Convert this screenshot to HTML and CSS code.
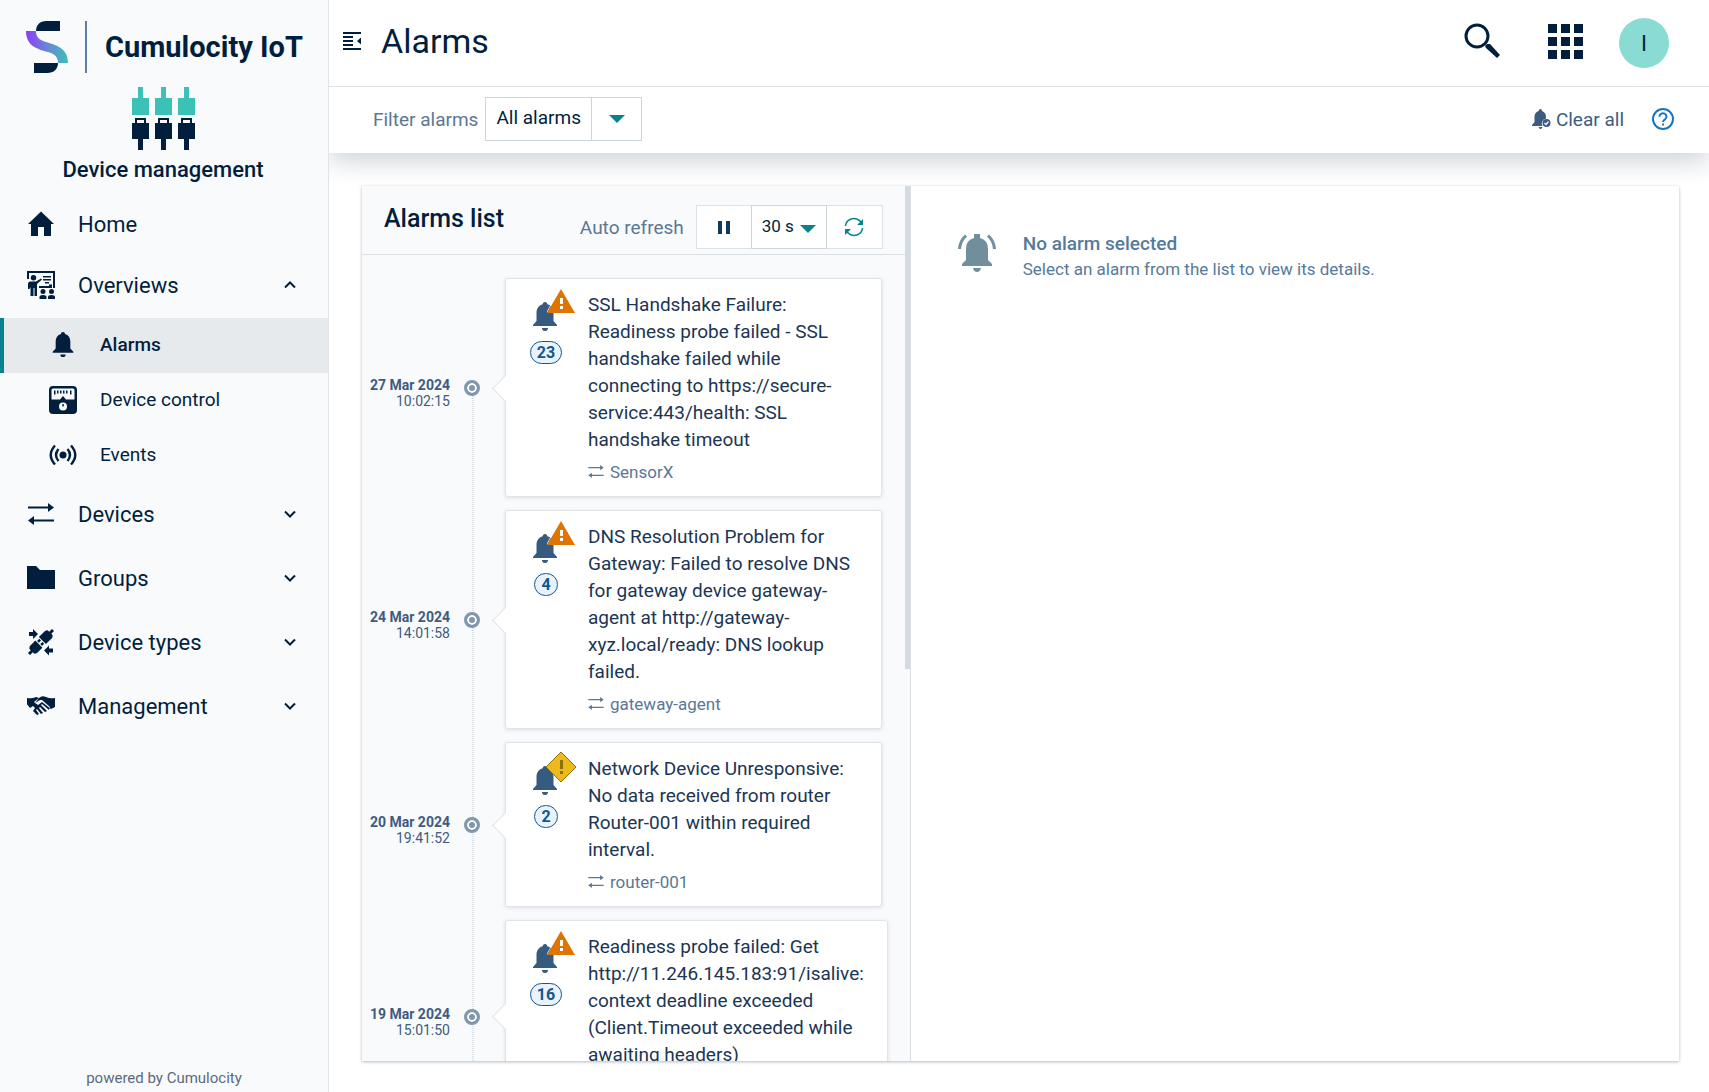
FILE: index.html
```html
<!DOCTYPE html>
<html lang="en">
<head>
<meta charset="utf-8">
<meta name="viewport" content="width=device-width, initial-scale=1">
<title>Alarms - Device management</title>
<link rel="stylesheet" href="styles.css">
</head>
<body>
<svg class="sprite" aria-hidden="true">
  <defs>
    <linearGradient id="brand" x1="0" y1="0" x2="1" y2="0"><stop offset="0" stop-color="#8b3ff5"/><stop offset=".5" stop-color="#6a84d8"/><stop offset="1" stop-color="#3fc0b4"/></linearGradient>
    <symbol id="bell" viewBox="0 0 24 29"><path d="M12 0c1.600 0 2.200 1 2.300 2.300C18.500 3.500 20.500 7 20.500 11v8l3.500 4v1H0v-1l3.500-4v-8c0-4 2-7.500 6.200-8.700C9.800 1 10.400 0 12 0ZM9 26h6a3 3 0 0 1-6 0Z"/></symbol>
    <symbol id="arrows" viewBox="0 0 26 22"><path d="M0 3.500h20V0l6 4.500-6 4.500V5.500H0ZM26 16.500H6V13l-6 4.500L6 22v-3.500h20Z"/></symbol>
    <symbol id="chevron" viewBox="0 0 12 8"><path d="m1 1.500 5 5 5-5" fill="none" stroke="currentColor" stroke-width="2"/></symbol>
    <symbol id="caret" viewBox="0 0 16 8"><path d="M0 0h16L8 8Z"/></symbol>
    <symbol id="cable" viewBox="0 0 17 63"><path fill="#3bc1b5" d="M6 0h5v11h6v17H0V11h6Z"/><path d="M3 31h11v5h3v16h-6v11H6V52H0V36h3Zm2 2v3h7v-3Z"/></symbol>
    <symbol id="critical" viewBox="0 0 28 24"><path fill="#fff" d="M14-3-2 26h16v-2H0Z"/><path fill="#e07400" d="M14 0l14 24H0Z"/><path fill="#fff" d="M13 9h3v6h-3zM13 17h3v3h-3z"/></symbol>
    <symbol id="minor" viewBox="0 0 32 32"><path d="M16 1l15 15-15 15L1 16Z" fill="#edb91d" stroke="#8a7304"/><path fill="#8a7304" d="M15 9h3v9h-3zM15 20h3v3h-3z"/></symbol>
  </defs>
</svg>
<div class="app">
  <aside class="sidebar">
    <div class="brand">
      <svg class="brand-mark" viewBox="0 0 42 52"><path d="M10 10C10 4 14 0 20 0H34V10Z"/><path fill="url(#brand)" d="M0 10H10C10 16 13 19 20 21C30 24 42 27 42 42H32C32 36 29 33 22 31C10 28 0 24 0 10Z"/><path d="M8 42H32C32 48 28 52 21 52H8Z"/></svg>
      <span class="brand-name">Cumulocity IoT</span>
    </div>
    <div class="app-id">
      <div class="cables"><svg><use href="#cable"/></svg><svg><use href="#cable"/></svg><svg><use href="#cable"/></svg></div>
      <div class="app-name">Device management</div>
    </div>
    <nav class="nav">
      <a class="nav-item nav-home" href="#"><svg class="nav-icon" viewBox="0 0 28 28"><path d="M14 1.500 27 14h-3v12h-7v-9h-6v9H4V14H1Z"/></svg><span>Home</span></a>
      <a class="nav-item" href="#"><svg class="nav-icon" viewBox="0 0 28 28"><path d="M0 0h28v17h-2V2H2v6H0ZM16 5h8v1.500h-8zM16 8h8v1.500h-8zM18 11h4v1.500h-4zM13 15h9v-1.500h3V17H12v-2ZM6.500 4a2.500 2.500 0 1 1 0 5.500 2.500 2.500 0 0 1 0-5.500ZM1 18v-5q0-2.500 2.500-2.500H9l5-3 1 1-5 4.500v12H7.500v-8h-1v8H3.500v-9L2.500 18Z"/><circle cx="16" cy="20.500" r="2.500"/><circle cx="24.500" cy="20.500" r="2.500"/><path d="M12.500 28v-2q0-2 3.500-2t3.500 2v2ZM21 28v-2q0-2 3.500-2t3.500 2v2Z"/></svg><span>Overviews</span><svg class="chevron up"><use href="#chevron"/></svg></a>
      <a class="nav-sub active" href="#"><svg class="nav-icon bell"><use href="#bell"/></svg><span>Alarms</span></a>
      <a class="nav-sub" href="#"><svg class="nav-icon" viewBox="0 0 28 28"><path fill-rule="evenodd" d="M4 0h20q4 0 4 4v20q0 4-4 4H4q-4 0-4-4V4q0-4 4-4ZM4 2.500Q2.500 2.500 2.500 4v9.500h8.500L14 10l3 3.500h8.500V4q0-1.500-1.500-1.500ZM14 16.500a4 4 0 1 0 0 8 4 4 0 0 0 0-8Z"/><path d="M5 4.500h1.500v4H5zM8 4.500h1.500v3H8zM11 4.500h1.500v3H11zM14 4.500h1.500v3H14zM17 4.500h1.500v3H17zM21 4.500h1.500v4H21zM13.300 18h1.500v2.500h-1.500z"/></svg><span>Device control</span></a>
      <a class="nav-sub" href="#"><svg class="nav-icon" viewBox="0 0 28 28"><circle cx="14" cy="14" r="3.500"/><path fill="none" stroke="currentColor" stroke-width="2.400" d="M6 4.500Q-2.500 14 6 23.500M22 4.500Q30.500 14 22 23.500M9.500 8Q4.500 14 9.500 20M18.500 8Q23.500 14 18.500 20"/></svg><span>Events</span></a>
      <a class="nav-item" href="#"><svg class="nav-icon arrows"><use href="#arrows"/></svg><span>Devices</span><svg class="chevron"><use href="#chevron"/></svg></a>
      <a class="nav-item" href="#"><svg class="nav-icon" viewBox="0 0 28 28"><path d="M0 2h9l4 4h15v19H0Z"/></svg><span>Groups</span><svg class="chevron"><use href="#chevron"/></svg></a>
      <a class="nav-item" href="#"><svg class="nav-icon" viewBox="0 0 28 28"><path d="M2 4h4V1l5 5-5 5V8H2ZM26 20.500h-4v-3l-5 5 5 5v-3h4Z"/><g transform="rotate(-45 14 14)"><path d="M-3 12.500h4v-2l2-1.500h8v10H3l-2-1.500v-2h-4ZM31 12.500h-4v-2L25 9h-9v10h9l2-1.500v-2h4ZM12 10.500h3v2.500h-3zM12 15h3v2.500h-3z"/></g></svg><span>Device types</span><svg class="chevron"><use href="#chevron"/></svg></a>
      <a class="nav-item" href="#"><svg class="nav-icon" viewBox="0 0 28 28"><path d="M0 6q5 1 9-1l3 1-4 5 3 2 4-3 9 7 4-2V6q-5 1-9-1-4-2-7 1l-5 4 1 1 5-3h2l8 7-1 3-7-6-1 1 6 6-2 1-5-5-1 1 4 5-2 1-4-5-1 1 3 4-2 1-4-4 2-3-2-2-3 2-4-5H0Z"/></svg><span>Management</span><svg class="chevron"><use href="#chevron"/></svg></a>
    </nav>
    <div class="powered">powered by Cumulocity</div>
  </aside>

  <div class="main">
    <header class="topbar">
      <button class="icon-btn" aria-label="Toggle navigation"><svg width="18" height="18" viewBox="0 0 18 18"><path d="M0 0h18v2H0zM0 4h10v2H0zM0 8h10v2H0zM0 12h10v2H0zM0 16h18v2H0zM18 5.500v7L14 9Z"/></svg></button>
      <h1>Alarms</h1>
      <div class="top-actions">
        <button class="icon-btn" aria-label="Search"><svg width="36" height="36" viewBox="0 0 36 36"><circle cx="13" cy="13" r="11" fill="none" stroke="currentColor" stroke-width="3"/><path d="M21 23l2-2h3l10 11-3 3-11-10Z"/></svg></button>
        <button class="icon-btn" aria-label="Applications"><svg width="35" height="35" viewBox="0 0 35 35"><path d="M0 0h9v9H0zM13 0h9v9h-9zM26 0h9v9h-9zM0 13h9v9H0zM13 13h9v9h-9zM26 13h9v9h-9zM0 26h9v9H0zM13 26h9v9h-9zM26 26h9v9h-9z"/></svg></button>
        <button class="avatar" aria-label="User">I</button>
      </div>
    </header>
    <div class="actionbar">
      <label for="filter">Filter alarms</label>
      <span class="select filter-select"><select id="filter"><option>All alarms</option></select><svg class="caret"><use href="#caret"/></svg></span>
      <button class="clear"><svg width="19" height="20" viewBox="0 0 19 20"><path d="M8.500 0q1.500 0 1.500 2 4 1.500 4 6v1.500a5 5 0 0 0-3.500 7.500H0v-1l2.500-3V8q0-4.500 4-6Q7 0 8.500 0ZM6.500 18h4q-.5 2-2 2t-2-2Z"/><circle cx="14.500" cy="14" r="4"/><path d="m12.500 14 1.500 1.500 2.500-3" fill="none" stroke="#fff" stroke-width="1.200"/></svg>Clear all</button>
      <button class="help" aria-label="Help"><svg width="22" height="22" viewBox="0 0 22 22"><g fill="none" stroke="currentColor" stroke-width="2"><circle cx="11" cy="11" r="10"/><path d="M7.500 8.700a3.500 3.300 0 1 1 5.500 2.600Q11 12.500 11 14M11 15.500v2"/></g></svg></button>
    </div>

    <main class="panel">
      <section class="list-pane">
        <div class="list-head">
          <h2>Alarms list</h2>
          <span class="auto">Auto refresh</span>
          <div class="group">
            <button class="group-btn" aria-label="Pause"><svg width="12" height="13" viewBox="0 0 12 13"><path fill="#12395f" d="M0 0h4v13H0zM8 0h4v13H8z"/></svg></button>
            <span class="select interval"><select aria-label="Refresh interval"><option>30 s</option></select><svg class="caret"><use href="#caret"/></svg></span>
            <button class="group-btn refresh" aria-label="Refresh"><svg width="20" height="20" viewBox="0 0 20 20"><path fill="none" stroke="currentColor" stroke-width="1.500" d="M1.500 9Q2 4 6.500 2.300 12.500 0 17 5M18.500 11q-.5 5-5 6.700Q7.500 20 3 15"/><path d="M19 2v6h-6ZM1 18v-6h6Z"/></svg></button>
          </div>
        </div>
        <ol class="timeline">
          <li class="event">
            <div class="when"><strong>27 Mar 2024</strong><time>10:02:15</time></div>
            <div class="rail"><i class="dot"></i></div>
            <article class="card">
              <div class="status"><svg class="alarm-bell"><use href="#bell"/></svg><svg class="severity critical"><use href="#critical"/></svg><span class="count">23</span></div>
              <div class="detail"><p>SSL Handshake Failure: Readiness probe failed - SSL handshake failed while connecting to https://secure-service:443/health: SSL handshake timeout</p><a href="#"><svg><use href="#arrows"/></svg>SensorX</a></div>
            </article>
          </li>
          <li class="event">
            <div class="when"><strong>24 Mar 2024</strong><time>14:01:58</time></div>
            <div class="rail"><i class="dot"></i></div>
            <article class="card">
              <div class="status"><svg class="alarm-bell"><use href="#bell"/></svg><svg class="severity critical"><use href="#critical"/></svg><span class="count">4</span></div>
              <div class="detail"><p>DNS Resolution Problem for Gateway: Failed to resolve DNS for gateway device gateway-agent at http://gateway-xyz.local/ready: DNS lookup failed.</p><a href="#"><svg><use href="#arrows"/></svg>gateway-agent</a></div>
            </article>
          </li>
          <li class="event">
            <div class="when"><strong>20 Mar 2024</strong><time>19:41:52</time></div>
            <div class="rail"><i class="dot"></i></div>
            <article class="card">
              <div class="status"><svg class="alarm-bell"><use href="#bell"/></svg><svg class="severity minor"><use href="#minor"/></svg><span class="count">2</span></div>
              <div class="detail"><p>Network Device Unresponsive: No data received from router Router-001 within required interval.</p><a href="#"><svg><use href="#arrows"/></svg>router-001</a></div>
            </article>
          </li>
          <li class="event">
            <div class="when"><strong>19 Mar 2024</strong><time>15:01:50</time></div>
            <div class="rail"><i class="dot"></i></div>
            <article class="card">
              <div class="status"><svg class="alarm-bell"><use href="#bell"/></svg><svg class="severity critical"><use href="#critical"/></svg><span class="count">16</span></div>
              <div class="detail"><p>Readiness probe failed: Get http://11.246.145.183:91/isalive: context deadline exceeded (Client.Timeout exceeded while awaiting headers)</p><a href="#"><svg><use href="#arrows"/></svg></a></div>
            </article>
          </li>
        </ol>
        <div class="thumb"></div>
      </section>
      <section class="detail-pane">
        <svg width="38" height="38" viewBox="0 0 38 38"><path d="M16 0h6v4q8 2 8 11v11l4 4v2H4v-2l4-4V15q0-9 8-11ZM15 34h8q-1 4-4 4t-4-4Z"/><path fill="none" stroke="currentColor" stroke-width="3" d="M8 1.500Q2 7 1.500 15M30 1.500q6 5.500 6.500 13.500"/></svg>
        <div><h3>No alarm selected</h3><p>Select an alarm from the list to view its details.</p></div>
      </section>
    </main>
  </div>
</div>
</body>
</html>
```
FILE: styles.css
```css
* { box-sizing: border-box; }
body {
  margin: 0;
  font-family: Roboto, "Liberation Sans", sans-serif;
  font-size: 19px;
  color: #011f3d;
  background: #fff;
}
h1, h2, h3, p, ol { margin: 0; padding: 0; }
a { color: inherit; text-decoration: none; }
svg { display: block; flex: none; fill: currentColor; }
button, select { font: inherit; color: inherit; background: none; border: 0; padding: 0; margin: 0; }
.sprite { position: absolute; width: 0; height: 0; }

.app { display: flex; height: 100vh; overflow: hidden; }

/* Sidebar */
.sidebar {
  display: flex;
  flex-direction: column;
  flex: 0 0 329px;
  background: #f9fafc;
  border-right: 1px solid #e0e4e9;
}
.brand { display: flex; align-items: center; padding: 21px 0 0 26px; }
.brand-mark { width: 42px; height: 52px; }
.brand-name {
  margin-left: 17px;
  padding-left: 18px;
  border-left: 2px solid #5f7fa3;
  font-size: 29px;
  font-weight: 700;
  line-height: 52px;
  white-space: nowrap;
}
.app-id {
  display: flex;
  flex-direction: column;
  align-items: center;
  padding: 14px 2px 0 0;
  height: 121px;
}
.cables { display: flex; gap: 6px; }
.cables svg { width: 17px; height: 63px; }
.app-name { margin-top: 7px; font-size: 22px; font-weight: 500; line-height: 26px; }
.nav { flex: 1; }
.nav-item, .nav-sub { display: flex; align-items: center; padding-bottom: 2px; }
.nav-item { height: 64px; padding-left: 27px; padding-right: 32px; gap: 23px; font-size: 22px; }
.nav-home { height: 60px; padding-bottom: 0; }
.nav-sub { height: 55px; padding-left: 45px; gap: 23px; border-left: 4px solid transparent; }
.nav-sub.active { background: #e6eaed; border-left-color: #07838f; font-weight: 500; }
.nav-icon { width: 28px; height: 28px; }
.nav-icon.bell { height: 25px; }
.nav-icon.arrows { height: 22px; }
.chevron { width: 12px; height: 8px; margin-left: auto; }
.chevron.up { transform: rotate(180deg); }
.powered { padding-bottom: 5px; font-size: 15px; line-height: 18px; text-align: center; color: #5a6a7c; }

/* Top bars */
.main { display: flex; flex-direction: column; flex: 1; min-width: 0; }
.topbar {
  display: flex;
  align-items: center;
  flex: 0 0 87px;
  padding: 0 40px 4px 14px;
  border-bottom: 1px solid #dce2e8;
}
.topbar h1 { margin-left: 20px; font-size: 34px; font-weight: 400; line-height: 40px; }
.top-actions { display: flex; align-items: center; gap: 48px; margin-left: auto; }
.avatar {
  width: 50px;
  height: 50px;
  margin: 4px 0 0 -12px;
  border-radius: 50%;
  background: #8adbd4;
  font-size: 22px;
}
.actionbar {
  display: flex;
  align-items: center;
  flex: 0 0 66px;
  padding: 0 35px 2px 44px;
  background: #fff;
  box-shadow: 0 8px 26px rgba(1, 31, 61, .2);
  clip-path: inset(0 0 -40px 0);
}
.actionbar label { color: #5b7795; }
.select { display: flex; position: relative; height: 44px; border: 1px solid #ccd4dc; background: #fff; }
.select select { width: 100%; appearance: none; }
.select .caret { position: absolute; top: 17px; width: 16px; height: 8px; color: #07838f; pointer-events: none; }
.filter-select { width: 157px; margin-left: 7px; }
.filter-select select {
  padding-left: 10px;
  padding-bottom: 3px;
  background: linear-gradient(#ccd4dc, #ccd4dc) 105px 0 / 1px 100% no-repeat;
}
.filter-select .caret { right: 16px; }
.clear { display: flex; align-items: center; gap: 5px; margin-left: auto; color: #3d5c80; }
.help { margin-left: 28px; color: #1776bf; }

/* Content */
.panel {
  display: grid;
  grid-template-columns: 5fr 7fr;
  flex: 1;
  min-height: 0;
  margin: 33px 30px 31px 33px;
  box-shadow: 0 1px 3px rgba(1, 31, 61, .3);
}
.list-pane {
  position: relative;
  min-width: 0;
  overflow: hidden;
  background: #f9fafc;
  border-right: 1px solid #dce0e5;
}
.thumb { position: absolute; top: 0; right: 0; width: 5px; height: 483px; background: #d5dade; }
.list-head {
  display: flex;
  height: 69px;
  padding: 19px 27px 0 22px;
  border-bottom: 1px solid #dce0e5;
}
.list-head h2 { font-size: 25px; font-weight: 500; line-height: 28px; }
.auto { margin-left: auto; line-height: 46px; color: #5b7795; }
.group { display: flex; margin-left: 12px; }
.group-btn {
  display: flex;
  align-items: center;
  justify-content: center;
  width: 56px;
  height: 44px;
  border: 1px solid #dce2e8;
  background: #fff;
}
.group-btn.refresh { color: #07838f; border-left: 0; }
.interval { width: 76px; margin-left: -1px; border-color: #ccd4dc; }
.interval select { padding: 0 0 2px 10px; font-size: 17px; }
.interval .caret { right: 10px; top: 19px; }

.timeline { padding: 17px 28px 0 0; list-style: none; }
.event { display: grid; grid-template-columns: 88px 55px minmax(auto, 1fr); }
.event > * { min-width: 0; }
.when {
  display: flex;
  flex-direction: column;
  justify-content: center;
  padding-top: 10px;
  text-align: right;
  font-size: 14px;
  line-height: 16px;
  color: #3d5c80;
  white-space: nowrap;
}
.rail {
  display: flex;
  align-items: center;
  padding-left: 14px;
  background: linear-gradient(#dce1e6 50%, transparent 50%) 22px 0 / 2px 2px repeat-y;
}
.event:first-child .rail {
  background:
    linear-gradient(#f9fafc, #f9fafc) 0 0 / 100% 50% no-repeat,
    linear-gradient(#dce1e6 50%, transparent 50%) 22px 0 / 2px 2px repeat-y;
}
.dot { width: 16px; height: 16px; border: 3px solid #7f97af; border-radius: 50%; background: #7f97af; box-shadow: inset 0 0 0 2px #fff; }
.event > .card {
  display: flex;
  position: relative;
  min-width: auto;
  margin-top: 6px;
  margin-bottom: 7px;
  padding: 12px 23px 11px 0;
  border: 1px solid #e0e4e9;
  border-radius: 3px;
  background: #fff;
  box-shadow: 0 1px 4px rgba(1, 31, 61, .12);
}
.card::before {
  content: "";
  position: absolute;
  top: 50%;
  left: -10px;
  width: 18px;
  height: 18px;
  margin-top: -9px;
  background: #fff;
  border: solid #e0e4e9;
  border-width: 0 0 1px 1px;
  transform: rotate(45deg);
}
.status {
  display: flex;
  flex-direction: column;
  align-items: center;
  position: relative;
  flex: 0 0 82px;
  padding: 11px 2px 0 0;
  color: #365a80;
}
.alarm-bell { width: 24px; height: 29px; margin-right: 2px; }
.severity { position: absolute; overflow: visible; }
.severity.critical { top: -2px; left: 41px; width: 28px; height: 24px; }
.severity.minor { top: -4px; left: 39px; width: 32px; height: 32px; }
.count {
  min-width: 23px;
  height: 23px;
  margin-top: 10px;
  padding: 0 6px;
  border: 1px solid #14568f;
  border-radius: 12px;
  background: #e8f3fd;
  color: #14568f;
  font-size: 16px;
  font-weight: 700;
  line-height: 22px;
  text-align: center;
}
.detail { flex: 1; color: #1b3554; }
.detail p { line-height: 27px; }
.detail a {
  display: flex;
  align-items: center;
  gap: 6px;
  height: 27px;
  margin-top: 5px;
  color: #5b7795;
  font-size: 17px;
}
.detail a svg { width: 16px; height: 13px; }

.detail-pane { display: flex; align-items: flex-start; gap: 27px; padding: 48px 47px; color: #708e9c; background: #fff; }
.detail-pane h3 { font-size: 19px; font-weight: 500; line-height: 20px; color: #557a9c; }
.detail-pane p { margin-top: 4px; font-size: 17px; line-height: 22px; color: #557a9c; }
```
